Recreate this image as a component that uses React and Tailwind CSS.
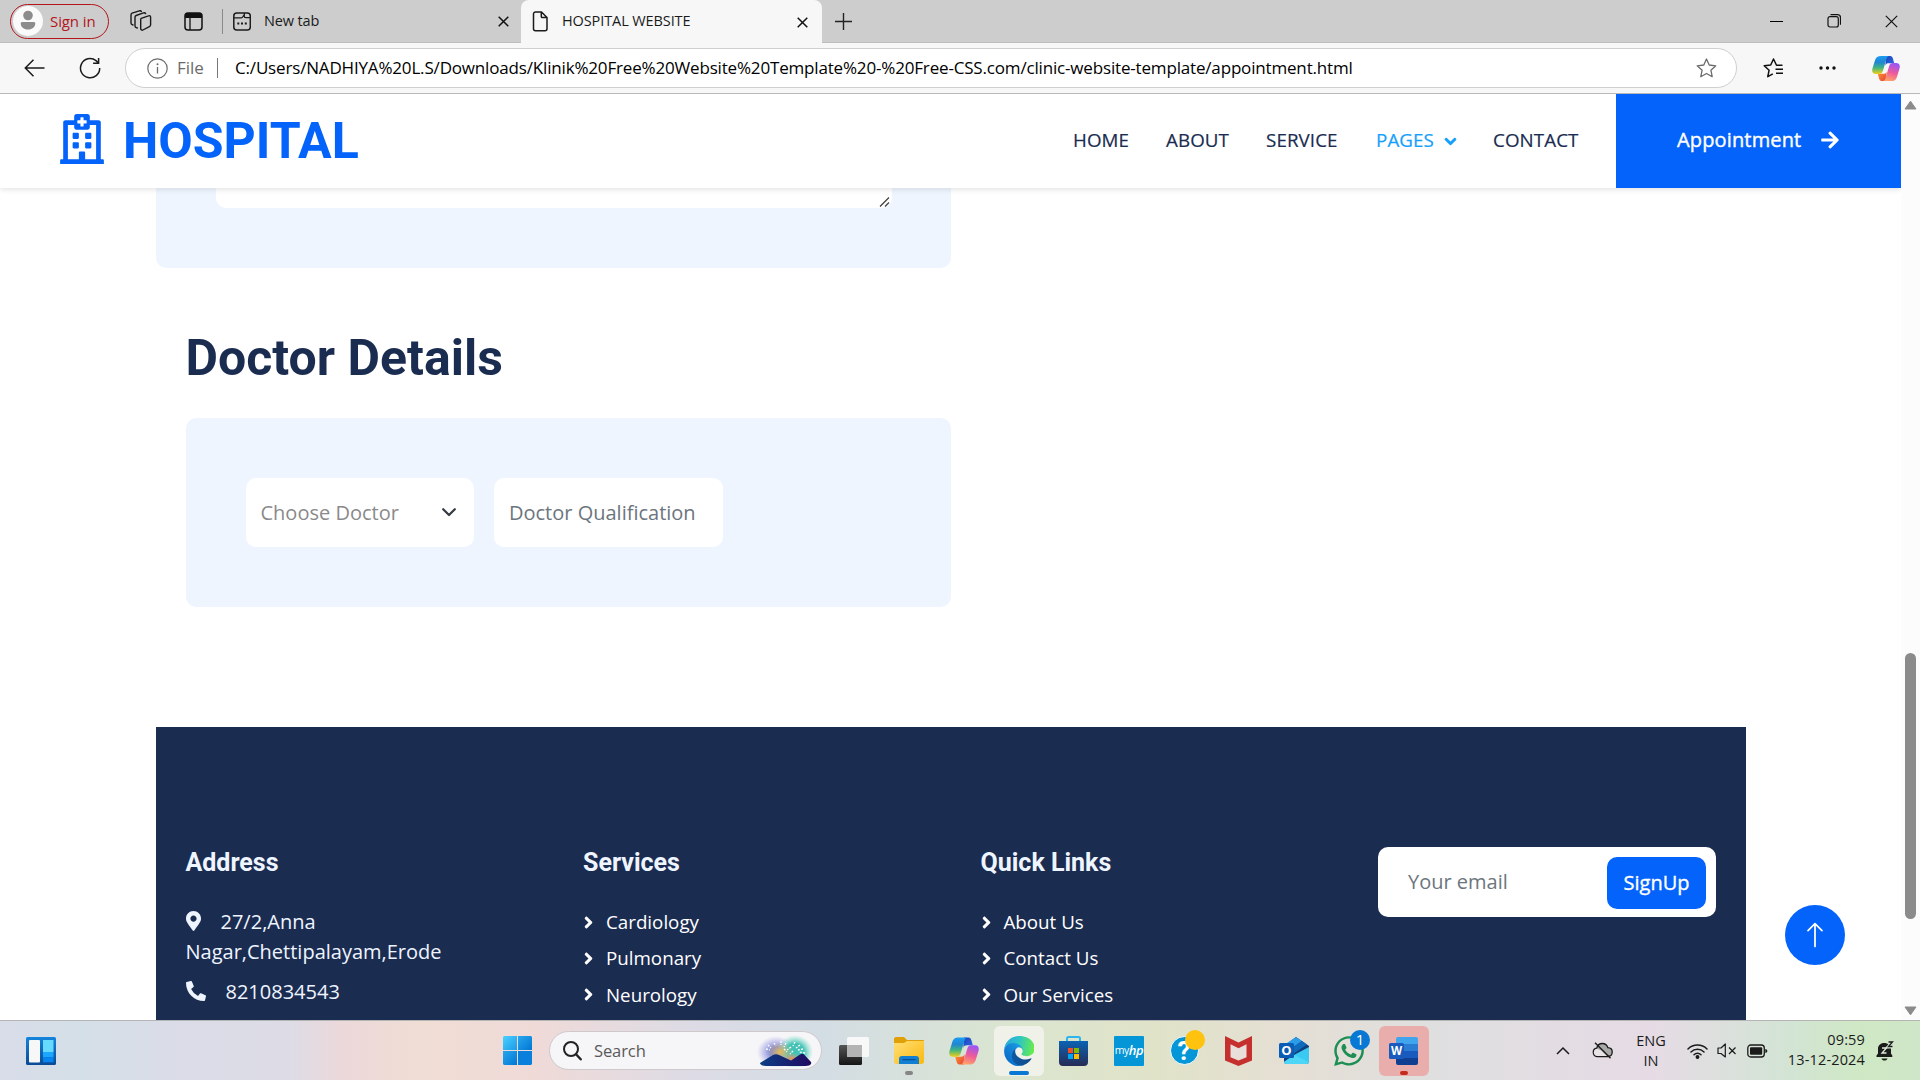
import React from "react";
import { FaRegHospital, FaAngleDown, FaAngleRight, FaArrowRight, FaMapMarkerAlt, FaPhoneAlt, FaWhatsapp } from "react-icons/fa";
import { BsArrowUp } from "react-icons/bs";

const Svg = ({ w, h, box, className = "", children, ...rest }) => (
  <svg width={w} height={h} viewBox={box || `0 0 ${w} ${h}`} fill="none" className={`shrink-0 ${className}`} {...rest}>
    {children}
  </svg>
);

const Close = ({ s = 11, className, color = "#111", sw = 1.5 }) => (
  <Svg w={s} h={s} box="0 0 11 11" className={className}>
    <path d="M.7.7l9.6 9.6M10.3.7L.7 10.3" stroke={color} strokeWidth={sw} />
  </Svg>
);

function Copilot({ id, className = "", w = 30, h = 28 }) {
  return (
    <Svg w={w} h={h} box="0 0 30 28" className={className}>
      <defs>
        <linearGradient id={`${id}a`} x1="0" y1="0" x2="0" y2="1">
          <stop offset="0" stopColor="#1a9df0" />
          <stop offset=".35" stopColor="#2085d4" />
          <stop offset=".65" stopColor="#3fb482" />
          <stop offset="1" stopColor="#f0cf18" />
        </linearGradient>
        <linearGradient id={`${id}b`} x1="0.6" y1="0" x2="0.3" y2="1">
          <stop offset="0" stopColor="#9a55f5" />
          <stop offset=".5" stopColor="#ee5a9b" />
          <stop offset="1" stopColor="#ffa667" />
        </linearGradient>
        <linearGradient id={`${id}c`} x1="0" y1="0" x2="1" y2="1">
          <stop offset="0" stopColor="#1b3fb8" />
          <stop offset="1" stopColor="#2f6ee8" />
        </linearGradient>
        <linearGradient id={`${id}d`} x1="0" y1="0" x2="1" y2="1">
          <stop offset="0" stopColor="#ff9a2e" />
          <stop offset="1" stopColor="#e6403a" />
        </linearGradient>
      </defs>
      <path d="M15 0.5h4.4c1.8 0 2.5 1.2 3 2.8l1.4 5H18c-2 0-3 .6-3.7 2.6z" fill={`url(#${id}c)`} />
      <path d="M15 27.5h-4.4c-1.8 0-2.5-1.2-3-2.8l-1.4-5H12c2 0 3-.6 3.7-2.6z" fill={`url(#${id}d)`} />
      <path d="M9.6.5h9c-2.1 0-2.8 2-3.4 4.2l-3.4 11.4c-.8 2.600-1.900 3.700-4.400 3.700H4.200C.6 19.800-.3 17.300.5 14L3.300 5C4.400 1.700 6 .5 9.600.5z" fill={`url(#${id}a)`} />
      <path d="M20.400 27.500h-9c2.100 0 2.800-2 3.400-4.200l3.400-11.400c.8-2.600 1.900-3.700 4.400-3.700h3.200c3.600 0 4.500 2.500 3.700 5.800l-2.800 9c-1.100 3.300-2.700 4.500-6.300 4.500z" fill={`url(#${id}b)`} />
    </Svg>
  );
}

function TabStrip() {
  return (
    <div className="flex h-[43px] items-stretch bg-[#cdcdcd] text-[14.5px] text-[#1b1b1b]">
      <div className="flex flex-1 items-center border-b border-[#bdbdbd]">
        <div className="ml-[10px] flex h-[35px] w-[99px] shrink-0 items-center rounded-full border border-[#b3151b]">
          <Svg w={30} h={30} className="ml-[2px]">
            <circle cx="15" cy="15" r="15" fill="#fafafa" />
            <circle cx="15" cy="9.500" r="4.800" fill="#8c8c8c" />
            <path d="M7.700 17.500c0-1 .6-1.600 1.600-1.600h11.400c1 0 1.600.6 1.600 1.600 0 3.400-3 6-7.300 6s-7.300-2.600-7.300-6z" fill="#8c8c8c" />
          </Svg>
          <span className="ml-[7px] text-[15px] tracking-[-0.1px] text-[#b3151b]">Sign in</span>
        </div>
        <Svg w={22} h={22} className="ml-[21px]" stroke="#1b1b1b" strokeWidth="1.400" strokeLinejoin="round" strokeLinecap="round">
          <path d="M11.200 8.300l7.300-2.500a1.500 1.500 0 0 1 2.100 1.400v7.600c0 .8-.4 1.500-1.200 1.800l-6.500 3.400a1.500 1.500 0 0 1-2.200-1.300V9.800c0-.7 0-1.200.5-1.500zM7.300 18l-1.100-.4a1.700 1.700 0 0 1-1.200-1.600V7.300c0-.8.400-1.500 1.100-1.800l7.400-2.700c.9-.3 1.700 0 2.100.8M3 15l-.8-.3A1.700 1.700 0 0 1 1 13.100V5c0-.8.4-1.500 1.100-1.800L9.300.8c.9-.3 1.600 0 2 .6" />
        </Svg>
        <Svg w={19} h={19} className="ml-[32px]">
          <rect x="1" y="1" width="17" height="17" rx="3" stroke="#111" strokeWidth="1.500" />
          <path d="M1 6V3.500A2.500 2.500 0 0 1 3.500 1h12A2.500 2.500 0 0 1 18 3.500V6z" fill="#111" />
          <path d="M6 6v12" stroke="#111" strokeWidth="1.300" />
        </Svg>
        <div className="ml-[19px] h-[25px] w-px bg-[#8a8a8a]" />
        <Svg w={18} h={19} className="ml-[10px]" stroke="#1b1b1b" strokeWidth="1.500">
          <rect x=".8" y="1" width="16.500" height="17" rx="3" />
          <path d="M1 5.800h7.200c1 0 1.300-.3 1.700-1l1-1.800M11.300 1v3.300c0 .9.500 1.400 1.400 1.400h4.500" strokeWidth="1.300" />
          <path d="M4.300 11.500h2M8 11.500h2M11.800 11.500h2" strokeWidth="2" />
        </Svg>
        <span className="ml-[13px] tracking-[-0.15px]">New tab</span>
        <Close className="mt-[1px] mr-[12px] ml-auto" />
      </div>
      <div className="flex w-[301px] shrink-0 items-center rounded-t-[8px] bg-[#f7f7f7]">
        <Svg w={16} h={21} className="ml-[11px]" stroke="#1b1b1b" strokeWidth="1.500" strokeLinejoin="round">
          <path d="M3.500 1h6L15 6.500v11.300a2 2 0 0 1-2 2H3.500a2 2 0 0 1-2-2V3a2 2 0 0 1 2-2zM9.300 1v4.500c0 .7.400 1.100 1.100 1.100H15" />
        </Svg>
        <span className="mb-[1px] ml-[14px] tracking-[-0.1px]">HOSPITAL WEBSITE</span>
        <Close className="mt-[1px] mr-[14px] ml-auto" />
      </div>
      <div className="flex w-[1098px] shrink-0 items-center border-b border-[#bdbdbd]">
        <Svg w={17} h={17} className="ml-[13px]">
          <path d="M8.500 0v17M0 8.500h17" stroke="#222" strokeWidth="1.400" />
        </Svg>
        <div className="mr-[22px] ml-auto flex items-center">
          <div className="h-px w-[13px] bg-black" />
          <Svg w={14} h={14} className="ml-[44px]" stroke="#111" strokeWidth="1.200">
            <rect x="1" y="2.700" width="10.300" height="10.300" rx="2" />
            <path d="M3.500.7h7a3 3 0 0 1 3 3v7" />
          </Svg>
          <Close s={13} className="ml-[44px]" sw={1} />
        </div>
      </div>
    </div>
  );
}

function AddressBar() {
  return (
    <div className="flex h-[51px] items-center border-b border-[#b9b9b9] bg-[#f7f7f7]">
      <Svg w={21} h={18} className="ml-[24px]" stroke="#1b1b1b" strokeWidth="1.500">
        <path d="M20.500 9H1.500M9.500 .8L1.300 9l8.200 8.200" />
      </Svg>
      <Svg w={22} h={22} className="ml-[34px]" stroke="#1b1b1b" strokeWidth="1.500">
        <path d="M20.700 11A9.600 9.600 0 1 1 17 3.600L19.500 6M19.600 1v5.300h-5.500" />
      </Svg>
      <div className="ml-[24px] flex h-[40px] w-[1612px] shrink-0 items-center rounded-full border border-[#cfcfcf] bg-white">
        <Svg w={21} h={21} className="ml-[21px]">
          <circle cx="10.500" cy="10.500" r="9.700" stroke="#6b6b6b" strokeWidth="1.200" />
          <path d="M10.500 9v6.500" stroke="#6b6b6b" strokeWidth="1.300" />
          <circle cx="10.500" cy="6.200" r="1" fill="#6b6b6b" />
        </Svg>
        <span className="ml-[9px] w-[28px] text-[17px] text-[#6b6b6b]">File</span>
        <div className="ml-[12px] h-[20px] w-px bg-[#777]" />
        <span className="ml-[17px] text-[17px] tracking-[-0.17px] whitespace-nowrap text-black">
          C:/Users/NADHIYA%20L.S/Downloads/Klinik%20Free%20Website%20Template%20-%20Free-CSS.com/clinic-website-template/appointment.html
        </span>
        <Svg w={21} h={20} className="mr-[19px] ml-auto" stroke="#6b6b6b" strokeWidth="1.300" strokeLinejoin="round">
          <path d="M10.500 1l2.700 6 6.600.8-4.900 4.400 1.300 6.500-5.700-3.200-5.700 3.200 1.300-6.500L1.200 7.800 7.800 7z" />
        </Svg>
      </div>
      <Svg w={21} h={20} className="ml-[26px]" stroke="#111" strokeWidth="1.500" strokeLinejoin="round">
        <path d="M19.500 7.300h-6L10.500 1 7.700 7 1.200 7.800l4.900 4.400-1.300 6.500 5-2.800M12.500 11.300h7.500M13 15.300h7" />
      </Svg>
      <Svg w={17} h={4} className="ml-[35px]" fill="#111">
        <circle cx="2" cy="2" r="1.700" fill="#111" />
        <circle cx="8.500" cy="2" r="1.700" fill="#111" />
        <circle cx="15" cy="2" r="1.700" fill="#111" />
      </Svg>
      <Copilot id="cpt" w={28} h={27} className="ml-[36px]" />
    </div>
  );
}

function Navbar() {
  return (
    <header className="relative z-10 flex h-[94px] items-center bg-white font-['Open_Sans',sans-serif] text-[18.75px] text-[#1b2c51] shadow-[0_2px_5px_rgba(0,0,0,0.1)]">
      <FaRegHospital className="mb-[4px] ml-[60px] h-[50px] w-[44px] shrink-0 text-[#0463fa]" />
      <span className="ml-[19px] font-[Roboto,sans-serif] text-[50px] leading-none font-bold text-[#0463fa]">HOSPITAL</span>
      <nav className="mb-[2px] ml-auto flex items-center tracking-[0.1px] [-webkit-text-stroke:0.2px_currentColor]">
        <a className="w-[93px]">HOME</a>
        <a className="w-[100px]">ABOUT</a>
        <a className="w-[110px]">SERVICE</a>
        <a className="flex w-[117px] items-center text-[#14a0fb]">
          PAGES <FaAngleDown className="mt-[3px] ml-[7px] h-[19px] w-[19px]" />
        </a>
        <a className="w-[123px]">CONTACT</a>
      </nav>
      <a className="flex h-full w-[285px] items-center bg-[#0463fa] pb-[2px] pl-[61px] text-[20px] font-medium tracking-[0.15px] text-white [-webkit-text-stroke:0.4px_white]">
        Appointment <FaArrowRight className="ml-[19px] h-[20px] w-[20px]" />
      </a>
    </header>
  );
}

function FormArea() {
  return (
    <section className="ml-[156px] w-[795px]">
      <div className="h-[80px] rounded-b-[10px] bg-[#eff5ff] pl-[60px]">
        <div className="flex h-[20px] w-[676px] items-end justify-end rounded-b-[10px] bg-white">
          <Svg w={11} h={10} className="mr-[2px] mb-[1px]">
            <path d="M1 9.500L10 .5M6 9.500l4-4" stroke="#444" strokeWidth="1.300" />
          </Svg>
        </div>
      </div>
      <h1 className="mt-[60px] ml-[29.500px] font-[Roboto,sans-serif] text-[50px] leading-[60px] font-bold text-[#1b2c51]">Doctor Details</h1>
      <div className="mt-[30px] ml-[30px] flex h-[189px] items-center gap-[20px] rounded-[10px] bg-[#eff5ff] pl-[60px] font-['Open_Sans',sans-serif] text-[20px]">
        <div className="flex h-[69px] w-[228px] items-center justify-between rounded-[10px] bg-white pr-[18px] pl-[14.500px] text-[#8a8a8a]">
          Choose Doctor
          <Svg w={14} h={9} stroke="#343a40" strokeWidth="2.200" strokeLinecap="round" strokeLinejoin="round">
            <path d="M1.200 1.200L7 7l5.800-5.800" />
          </Svg>
        </div>
        <div className="flex h-[69px] w-[229px] items-center rounded-[10px] bg-white pl-[15px] whitespace-nowrap text-[#6c757d]">Doctor Qualification</div>
      </div>
    </section>
  );
}

const FooterTitle = ({ children }) => (
  <h5 className="pt-[1px] font-[Roboto,sans-serif] text-[25px] leading-[30px] font-bold text-[#eff5ff]">{children}</h5>
);

const LinkColumn = ({ title, items }) => (
  <div className="w-[397.500px] shrink-0">
    <FooterTitle>{title}</FooterTitle>
    <ul className="mt-[29px] text-[18.75px] text-white">
      {items.map((t) => (
        <li key={t} className="mb-[6.400px] flex h-[30px] items-center">
          <FaAngleRight className="-ml-[4px] h-[19px] w-[19px]" />
          <span className="ml-[8px]">{t}</span>
        </li>
      ))}
    </ul>
  </div>
);

function Footer() {
  return (
    <footer className="mt-[120px] ml-[156px] flex h-[293px] w-[1590px] overflow-hidden bg-[#1b2c51] pt-[120px] pl-[29.500px] font-['Open_Sans',sans-serif] text-[20px] leading-[30px] text-[#eff5ff]">
      <div className="w-[397.500px] shrink-0">
        <FooterTitle>Address</FooterTitle>
        <p className="mt-[29px]">
          <FaMapMarkerAlt className="mr-[20px] inline-block h-[20px] w-[15px] align-[-2px]" />
          27/2,Anna
          <br />
          Nagar,Chettipalayam,Erode
        </p>
        <p className="mt-[10px]">
          <FaPhoneAlt className="mr-[20px] inline-block h-[20px] w-[20px] align-[-2px]" />
          8210834543
        </p>
      </div>
      <LinkColumn title="Services" items={["Cardiology", "Pulmonary", "Neurology"]} />
      <LinkColumn title="Quick Links" items={["About Us", "Contact Us", "Our Services"]} />
      <div className="flex h-[70px] w-[338px] items-center justify-between rounded-[10px] bg-white pr-[10px] pl-[30px] text-[#6c757d]">
        Your email
        <div className="mt-[2px] flex h-[52px] w-[99px] items-center justify-center rounded-[10px] bg-[#0463fa] font-medium text-white [-webkit-text-stroke:0.35px_white]">
          SignUp
        </div>
      </div>
    </footer>
  );
}

function Scrollbar() {
  return (
    <div className="flex w-[19px] flex-col items-center bg-[#fcfcfc]">
      <Svg w={13} h={10} className="mt-[6px]">
        <path d="M6.500 1.200L12 9H1z" fill="#8b8b8b" stroke="#8b8b8b" strokeLinejoin="round" />
      </Svg>
      <div className="mt-[543px] h-[266px] w-[11px] rounded-full bg-[#8b8b8b]" />
      <Svg w={13} h={10} className="mt-auto mb-[4px]">
        <path d="M6.500 8.800L1 1h11z" fill="#8b8b8b" stroke="#8b8b8b" strokeLinejoin="round" />
      </Svg>
    </div>
  );
}

const Slot = ({ className = "", dot, children }) => (
  <div className={`relative flex h-[50px] w-[50px] shrink-0 items-center justify-center rounded-[6px] ${className}`}>
    {children}
    {dot && <div className={`absolute bottom-[1px] h-[4px] rounded-full ${dot}`} />}
  </div>
);

function Taskbar() {
  return (
    <div className="flex h-[60px] items-center border-t border-[#b5b5b5] bg-[linear-gradient(90deg,#d9dde9_0%,#d4dfe7_4%,#dadce7_9%,#dddce6_15%,#ecd8d9_18%,#f0ddd4_22%,#efdad8_28%,#dddbe5_36%,#d3dde4_43%,#dbe5cf_53%,#e0e3c8_60%,#e5dfd4_67%,#dfdfe0_75%,#e6dbe5_86%,#d3e4d5_93%,#cfe8c4_97%,#cfe6c8_100%)] text-[#1b1b1b]">
      <Svg w={30} h={28} className="ml-[26px]">
        <defs>
          <linearGradient id="wid" x1="0" y1="0" x2="0" y2="1">
            <stop stopColor="#1484dc" />
            <stop offset="1" stopColor="#0b4a94" />
          </linearGradient>
        </defs>
        <rect width="30" height="28" rx="1.500" fill="url(#wid)" />
        <rect x="3" y="3" width="11" height="22.500" rx="1" fill="#f7f7f7" />
        <path d="M17 3h10.500v12H17z" fill="#66d9ff" />
        <path d="M17 15h10.500v5.300H17z" fill="#1ba6ff" />
        <path d="M17 20.300h10.500v5H17z" fill="#0784ee" />
      </Svg>
      <Svg w={29} h={29} className="ml-[447px]">
        <defs>
          <linearGradient id="win" x1="0" y1="0" x2="1" y2="1" gradientUnits="objectBoundingBox">
            <stop stopColor="#4cd0ff" />
            <stop offset="1" stopColor="#1c9be8" />
          </linearGradient>
          <linearGradient id="win2" x1="0" y1="0" x2="1" y2="1">
            <stop stopColor="#2aa6ee" />
            <stop offset="1" stopColor="#0077d4" />
          </linearGradient>
        </defs>
        <path d="M1 0h13v14H0V1z" fill="url(#win)" />
        <path d="M15 0h13l1 1v13H15z" fill="url(#win2)" />
        <path d="M0 15h14v14H1l-1-1z" fill="url(#win2)" />
        <path d="M15 15h14v13l-1 1H15z" fill="#0a80dc" />
      </Svg>
      <div className="ml-[17px] flex h-[39px] w-[273px] shrink-0 items-center rounded-full border border-[#cfc9cc] bg-[#f6f5f7]">
        <Svg w={19} h={20} className="ml-[13px]">
          <circle cx="8" cy="8" r="7" stroke="#222" strokeWidth="2" />
          <path d="M13 13.300l4.700 5" stroke="#222" strokeWidth="2.400" strokeLinecap="round" />
        </Svg>
        <span className="mt-[1px] ml-[12px] text-[16.5px] tracking-[-0.1px] text-[#5a5a5a]">Search</span>
        <Svg w={56} h={32} className="mr-[8px] ml-auto">
          <defs>
            <radialGradient id="skyl">
              <stop offset=".3" stopColor="#7d86d8" />
              <stop offset="1" stopColor="#a9a5ea" stopOpacity="0" />
            </radialGradient>
            <radialGradient id="skyr">
              <stop offset=".5" stopColor="#45c2b6" />
              <stop offset="1" stopColor="#7be0c8" stopOpacity="0" />
            </radialGradient>
            <radialGradient id="glow">
              <stop stopColor="#e8bb55" />
              <stop offset="1" stopColor="#d0b47a" stopOpacity="0" />
            </radialGradient>
            <radialGradient id="dusk">
              <stop stopColor="#ff8a50" />
              <stop offset="1" stopColor="#f0a070" stopOpacity="0" />
            </radialGradient>
            <linearGradient id="hill">
              <stop stopColor="#0d3f85" />
              <stop offset="1" stopColor="#200a60" />
            </linearGradient>
          </defs>
          <ellipse cx="19" cy="17" rx="19" ry="16" fill="url(#skyl)" />
          <ellipse cx="38" cy="17" rx="18" ry="17" fill="url(#skyr)" />
          <ellipse cx="23" cy="17" rx="13" ry="10" fill="url(#glow)" />
          <ellipse cx="35" cy="24" rx="9" ry="6" fill="url(#dusk)" />
          <path d="M17 8l2 3M11 10l3 3M9 14l4 1M24 6v4M29 8l-2 4M34 12l-4 3M38 7l-2 4M43 10l-4 3M46 14l-5 1M48 18l-6-1M36 16l-3 3M27 14l3 3" stroke="#fff" strokeWidth="1.300" strokeDasharray="2 1.300" />
          <path d="M3 28L16 20c2-1 4-1 6 0l12 5.500 9-6c2-1 3-1 4 0l7 7.500c1 3-2 4-5 4H9c-3 0-6-1-6-3z" fill="url(#hill)" />
        </Svg>
      </div>
      <div className="ml-[7px] flex gap-[5px]">
        <Slot>
          <Svg w={30} h={28}>
            <defs>
              <linearGradient id="tv" x1="0" y1="0" x2="0" y2="1">
                <stop stopColor="#555" />
                <stop offset="1" stopColor="#151515" />
              </linearGradient>
            </defs>
            <rect y="8" width="23" height="20" rx="1.500" fill="url(#tv)" />
            <rect x="8" width="22" height="20" rx="1.500" fill="#f8f8f8" />
            <path d="M8 8h15v12H9.500A1.500 1.500 0 0 1 8 18.500z" fill="#b4b4b4" />
          </Svg>
        </Slot>
        <Slot dot="w-[8px] bg-[#858585]">
          <Svg w={30} h={27}>
            <defs>
              <linearGradient id="fo" x1="0" y1="0" x2="1" y2="1">
                <stop stopColor="#ffdf76" />
                <stop offset="1" stopColor="#fbb80d" />
              </linearGradient>
            </defs>
            <path d="M0 2C0 1 .8 0 2 0h8l3 3h16c.6 0 1 .4 1 1v8H0z" fill="#e0a007" />
            <path d="M0 6h10l3-2h17v20.500c0 1.500-1 2.500-2.500 2.500h-25C1 27 0 26 0 24.500z" fill="url(#fo)" />
            <path d="M5 27v-5a3 3 0 0 1 3-3h14a3 3 0 0 1 3 3v5z" fill="#127fd3" />
            <path d="M9 22.700h12" stroke="#0a4f94" strokeWidth="1.300" strokeLinecap="round" />
          </Svg>
        </Slot>
        <Slot>
          <Copilot id="cpb" />
        </Slot>
        <Slot className="bg-[#f0f2ea]" dot="w-[20px] bg-[#0878d4]">
          <Svg w={30} h={30} box="0 0 256 256">
            <defs>
              <linearGradient id="e1" x1="58" y1="177" x2="231" y2="177" gradientUnits="userSpaceOnUse">
                <stop stopColor="#0c59a4" />
                <stop offset="1" stopColor="#114a8b" />
              </linearGradient>
              <linearGradient id="e2" x1="152" y1="85" x2="46" y2="202" gradientUnits="userSpaceOnUse">
                <stop stopColor="#1b9de2" />
                <stop offset=".6" stopColor="#127fd4" />
                <stop offset="1" stopColor="#0a72cd" />
              </linearGradient>
              <linearGradient id="e3" x1="10" y1="60" x2="250" y2="110" gradientUnits="userSpaceOnUse">
                <stop stopColor="#2ba8dc" />
                <stop offset=".45" stopColor="#2dc4c6" />
                <stop offset="1" stopColor="#66eb4e" />
              </linearGradient>
            </defs>
            <path d="M231 190a93 93 0 0 1-11 5 102 102 0 0 1-36 6c-47 0-89-33-89-74a31 31 0 0 1 17-27c-43 2-54 46-54 72 0 74 68 81 82 81 8 0 20-2 27-4l1-1a128 128 0 0 0 67-53 4 4 0 0 0-4-5z" fill="url(#e1)" />
            <path d="M106 241a79 79 0 0 1-23-21 81 81 0 0 1 29-120c3-2 9-4 16-4a33 33 0 0 1 26 13 33 33 0 0 1 7 20c0-1 25-80-80-80C37 49 1 91 1 128a130 130 0 0 0 12 56 128 128 0 0 0 156 66 75 75 0 0 1-63-9z" fill="url(#e2)" />
            <path d="M152 149c-1 1-3 2-3 6 0 3 2 5 5 8 15 11 44 9 44 9a63 63 0 0 0 32-9 65 65 0 0 0 32-56c0-24-8-39-12-46C230 20 181 0 128 0A128 128 0 0 0 0 126c1-36 37-66 80-66 4 0 24 0 42 10 16 8 24 18 30 28 6 11 8 25 8 30 0 6-3 14-8 21z" fill="url(#e3)" />
          </Svg>
        </Slot>
        <Slot>
          <Svg w={29} h={30} className="-ml-[1px]">
            <defs>
              <linearGradient id="st" x1="0" y1="0" x2="0" y2="1">
                <stop stopColor="#0b62b4" />
                <stop offset="1" stopColor="#272c55" />
              </linearGradient>
            </defs>
            <path d="M8 6V2.500C8 1.700 8.700 1 9.500 1h10c.8 0 1.500.7 1.500 1.500V6" stroke="#2db5ee" strokeWidth="2" />
            <path d="M0 5h29v21a4 4 0 0 1-4 4H4a4 4 0 0 1-4-4z" fill="url(#st)" />
            <path d="M9 12h5v5H9z" fill="#f25022" />
            <path d="M15 12h5v5h-5z" fill="#7fba00" />
            <path d="M9 18h5v5H9z" fill="#00a4ef" />
            <path d="M15 18h5v5h-5z" fill="#ffb900" />
          </Svg>
        </Slot>
        <Slot>
          <div className="flex h-[30px] w-[30px] items-center justify-center rounded-[1px] bg-[#0596d7] text-[10.5px] leading-none tracking-[-0.5px] text-white">
            my<span className="text-[13px] font-semibold italic">hp</span>
          </div>
        </Slot>
        <Slot>
          <div className="flex h-[29px] w-[29px] items-center justify-center rounded-full border-[1.500px] border-white bg-[#0596d7] font-[Roboto,sans-serif] text-[26px] leading-none font-bold text-white">?</div>
          <div className="absolute top-[4px] left-[26px] h-[20px] w-[20px] rounded-full bg-[#ffc20e]" />
        </Slot>
        <Slot>
          <Svg w={27} h={30} className="-ml-[1px]">
            <path d="M0 0l13.500 6.500L27 0v24.500L13.500 30 0 24.500z" fill="#c5302f" />
            <path d="M5.500 8.200l8 4 8-4v13l-8 3.300-8-3.300z" fill="#e9dfda" />
          </Svg>
        </Slot>
        <Slot>
          <Svg w={30} h={27}>
            <path d="M5 9L17 0l13 9v15a3 3 0 0 1-3 3H8a3 3 0 0 1-3-3z" fill="#123f7d" />
            <path d="M5 8L17 0l6 4-13 9H5z" fill="#2b9ce8" />
            <path d="M23 4l5 3.500L14 17l-4-4z" fill="#0f6cbd" />
            <path d="M30 10v14a3 3 0 0 1-3 3H8c-2 0-3-1-3-2l10-7z" fill="#39c9f3" />
            <path d="M15 18l15 7c-.5 1.200-1.500 2-3 2H8c-2 0-3-1-3-2z" fill="#4fd6f6" />
            <rect y="6" width="15" height="15" rx="1.500" fill="#0a5cb4" />
            <text x="7.500" y="18.200" textAnchor="middle" fontSize="13" fontWeight="700" fill="#fff" fontFamily="Open Sans, sans-serif">O</text>
          </Svg>
        </Slot>
        <Slot>
          <FaWhatsapp className="h-[34px] w-[34px] text-[#1d8f55]" />
          <div className="absolute top-[4px] left-[26px] flex h-[20px] w-[20px] items-center justify-center rounded-full bg-[#0878d4] text-[15px] leading-none text-white">1</div>
        </Slot>
        <Slot className="bg-[#e9aeab]" dot="w-[8px] bg-[#c42b1c]">
          <Svg w={29} h={28} className="-ml-[1px]">
            <path d="M7 2a2 2 0 0 1 2-2h18a2 2 0 0 1 2 2v5H7z" fill="#41a5ee" />
            <path d="M7 7h22v7H7z" fill="#2b7cd3" />
            <path d="M7 14h22v7H7z" fill="#185abd" />
            <path d="M7 21h22v5a2 2 0 0 1-2 2H9a2 2 0 0 1-2-2z" fill="#103f91" />
            <rect y="6" width="15" height="16" rx="1.500" fill="#185abd" />
            <text x="7.500" y="18" textAnchor="middle" fontSize="11.500" fontWeight="700" fill="#fff" fontFamily="Open Sans, sans-serif">W</text>
          </Svg>
        </Slot>
      </div>
      <Svg w={14} h={9} className="ml-[127px]">
        <path d="M1 8l6-6 6 6" stroke="#1b1b1b" strokeWidth="1.500" />
      </Svg>
      <Svg w={21} h={17} className="ml-[22px]">
        <path d="M5 14.500a4.200 4.200 0 0 1-.3-8.300C5.500 3.300 7.500 1.500 10.300 1.500s4.800 1.500 5.500 4.200c2.500.1 4.400 1.800 4.400 4.300 0 2.600-1.800 4.500-4.400 4.500z" fill="#a9a9a9" stroke="#1b1b1b" strokeWidth="1.300" />
        <path d="M5 14a3.700 3.700 0 0 1 0-7.300l4 1.500 6 5.800z" fill="#e8e4e6" />
        <path d="M3 .8l15.500 15.500" stroke="#1b1b1b" strokeWidth="1.400" />
      </Svg>
      <div className="ml-[22px] w-[32px] text-center text-[14.5px] leading-[20px]">
        ENG
        <br />
        IN
      </div>
      <Svg w={21} h={16} className="ml-[20px]" stroke="#1b1b1b" strokeWidth="1.500" strokeLinecap="round">
        <path d="M1 6a13.500 13.500 0 0 1 19 0M4 9a9.300 9.300 0 0 1 13 0M7 11.800a5 5 0 0 1 7 0" />
        <circle cx="10.500" cy="14" r="1.200" fill="#1b1b1b" />
      </Svg>
      <Svg w={20} h={15} className="ml-[9px]" stroke="#1b1b1b" strokeWidth="1.200" strokeLinejoin="round">
        <path d="M1 5h3l4.300-4v13L4 10.500H1zM12 4.500l6.500 6.500M18.500 4.500L12 11" />
      </Svg>
      <Svg w={21} h={14} className="ml-[10px]">
        <rect x=".8" y="1" width="16.500" height="12" rx="3" stroke="#1b1b1b" strokeWidth="1.300" />
        <rect x="3" y="3.200" width="12.200" height="7.600" rx="1" fill="#1b1b1b" />
        <path d="M18.300 5c1.400.2 2 1 2 2s-.6 1.800-2 2z" fill="#1b1b1b" />
      </Svg>
      <div className="mb-[2px] ml-[15px] w-[82px] text-right text-[14.5px] leading-[20px] tracking-[0.15px] whitespace-nowrap">
        09:59
        <br />
        13-12-2024
      </div>
      <Svg w={18} h={20} className="ml-[11px]">
        <path d="M8 2C4.500 2 2 4.500 2 7.500v5L.5 14.500V16h15.800v-1.500L15 12.500v-5C15 4.500 12 2 8 2zM5.500 17.500h6c-.5 1.500-1.600 2-3 2s-2.500-.5-3-2z" fill="#1b1b1b" />
        <path d="M6 7h4.500L6 12h4.500" stroke="#dfe9dd" strokeWidth="1.300" />
        <path d="M12 1h4.500L12 6h4.500" stroke="#d5e6d3" strokeWidth="3" />
        <path d="M12.500 1h4L12.500 5.500h4" stroke="#1b1b1b" strokeWidth="1.300" />
      </Svg>
    </div>
  );
}

export default function App() {
  return (
    <div className="flex h-[1080px] w-[1920px] flex-col overflow-hidden bg-white font-['Open_Sans',sans-serif]">
      <TabStrip />
      <AddressBar />
      <div className="flex h-[926px] shrink-0">
        <main className="relative w-[1901px] shrink-0 overflow-hidden">
          <Navbar />
          <FormArea />
          <Footer />
          <button className="absolute right-[56px] bottom-[55px] flex h-[60px] w-[60px] items-center justify-center rounded-full bg-[#0463fa] text-white">
            <BsArrowUp className="h-[28px] w-[28px]" />
          </button>
        </main>
        <Scrollbar />
      </div>
      <Taskbar />
    </div>
  );
}
